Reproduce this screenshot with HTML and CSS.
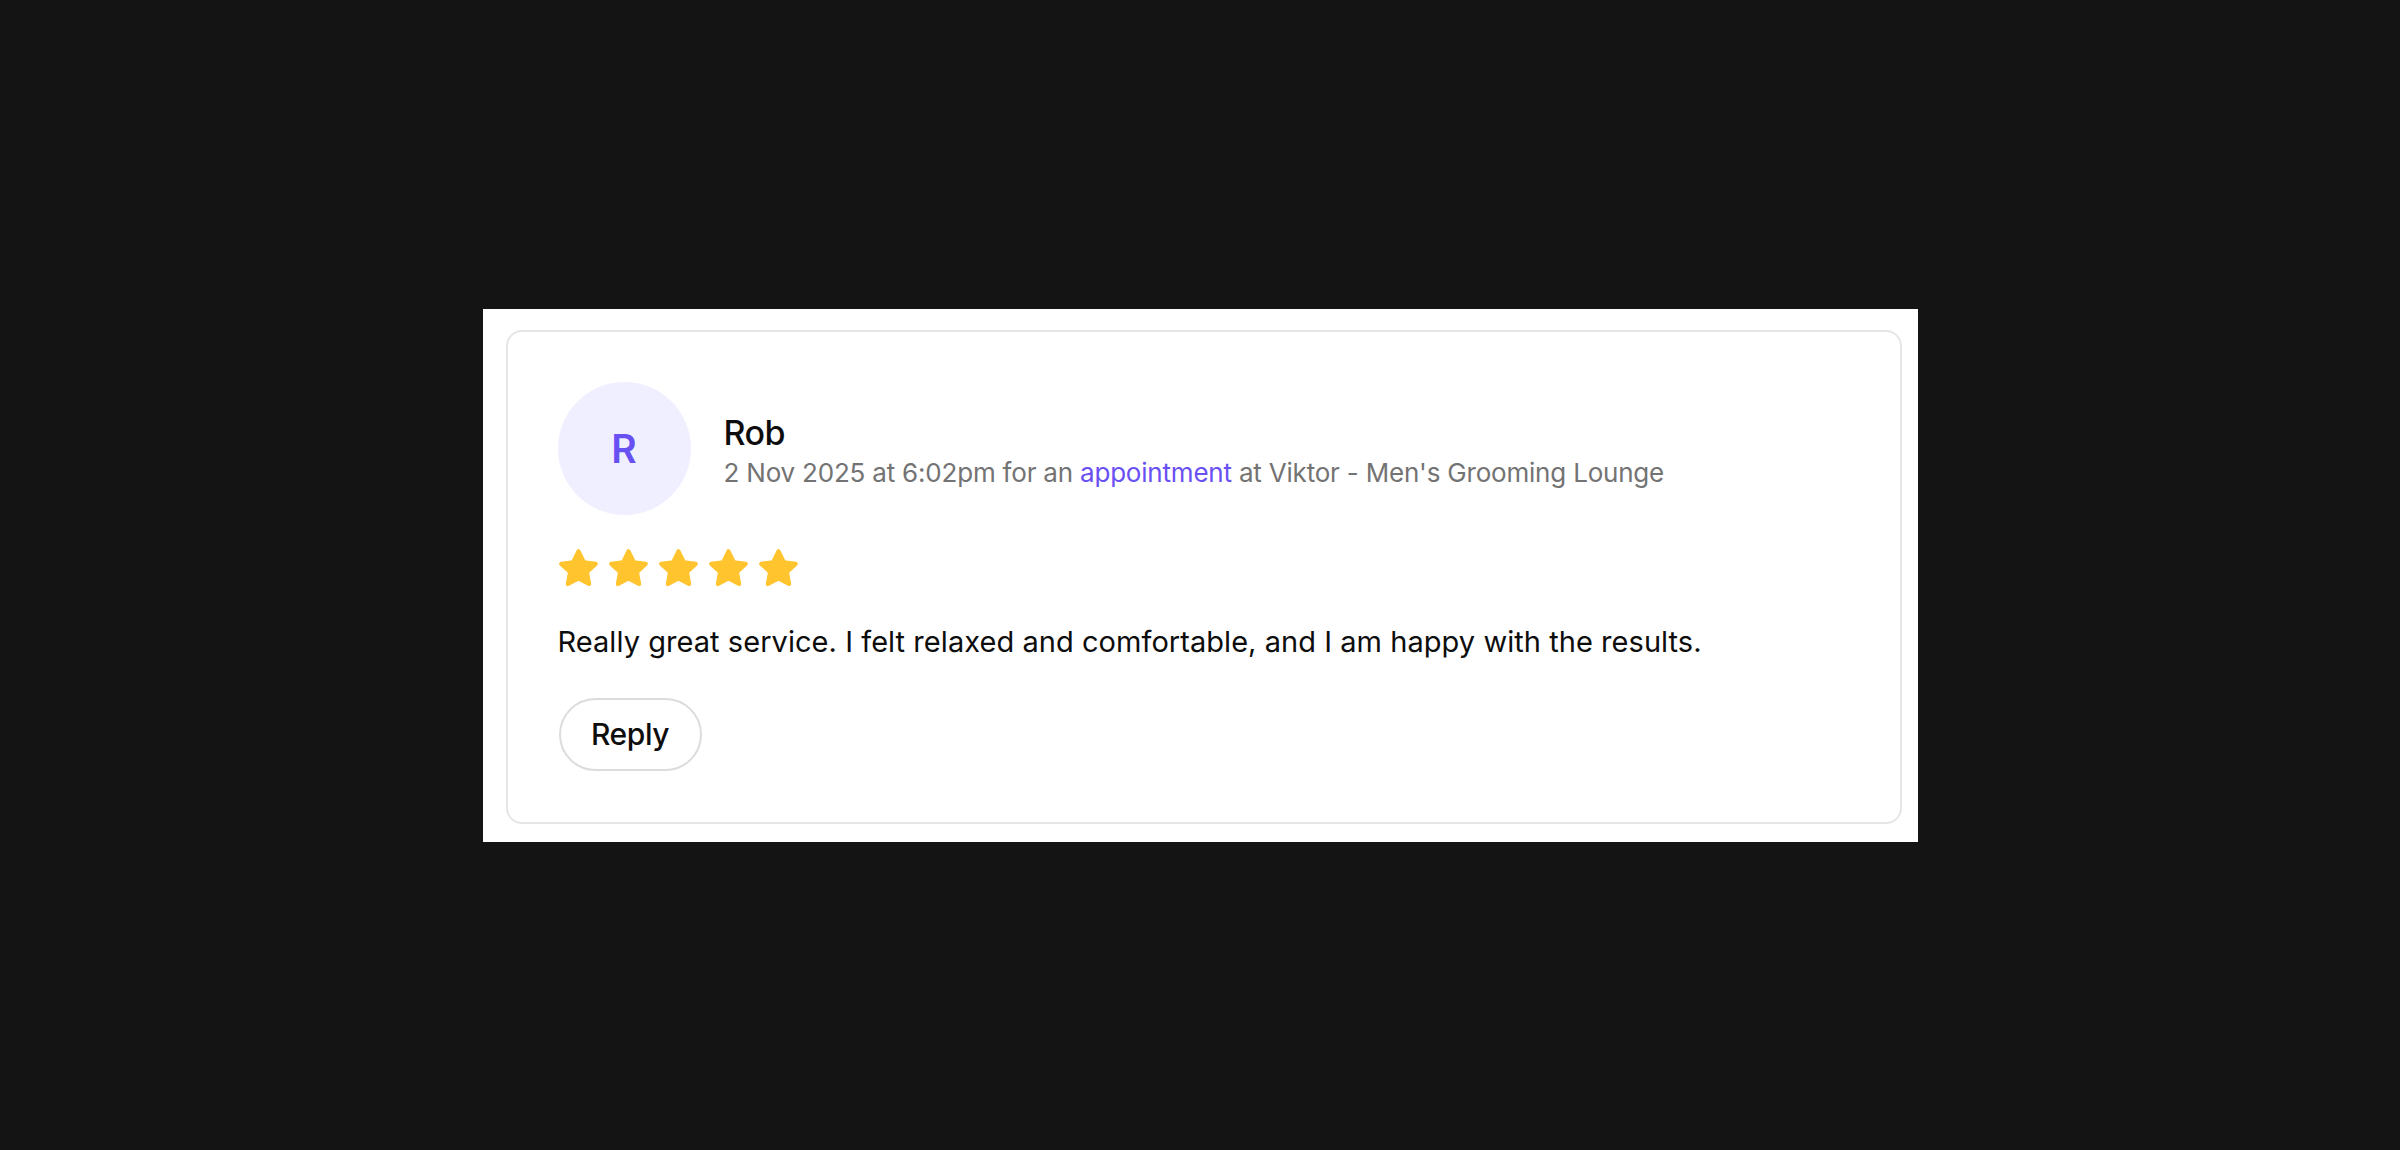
FILE: index.html
```html
<!DOCTYPE html>
<html lang="en">
<head>
<meta charset="utf-8">
<title>Review</title>
<link rel="stylesheet" href="styles.css">
</head>
<body>
<div class="stage">
  <div class="panel">
    <div class="card">
      <div class="header">
        <div class="avatar">R</div>
        <div class="meta">
          <div class="name">Rob</div>
          <div class="sub">2 Nov 2025 at 6:02pm for an <a class="link" href="#">appointment</a> at Viktor - Men's Grooming Lounge</div>
        </div>
      </div>
      <div class="stars">
        <svg class="star" viewBox="2 2 20 20"><path d="M12 3.2l2.7 5.6 6.1.8-4.5 4.2 1.1 6.1L12 17l-5.4 2.9 1.1-6.1-4.5-4.2 6.1-.8z"/></svg>
        <svg class="star" viewBox="2 2 20 20"><path d="M12 3.2l2.7 5.6 6.1.8-4.5 4.2 1.1 6.1L12 17l-5.4 2.9 1.1-6.1-4.5-4.2 6.1-.8z"/></svg>
        <svg class="star" viewBox="2 2 20 20"><path d="M12 3.2l2.7 5.6 6.1.8-4.5 4.2 1.1 6.1L12 17l-5.4 2.9 1.1-6.1-4.5-4.2 6.1-.8z"/></svg>
        <svg class="star" viewBox="2 2 20 20"><path d="M12 3.2l2.7 5.6 6.1.8-4.5 4.2 1.1 6.1L12 17l-5.4 2.9 1.1-6.1-4.5-4.2 6.1-.8z"/></svg>
        <svg class="star" viewBox="2 2 20 20"><path d="M12 3.2l2.7 5.6 6.1.8-4.5 4.2 1.1 6.1L12 17l-5.4 2.9 1.1-6.1-4.5-4.2 6.1-.8z"/></svg>
      </div>
      <p class="review">Really great service. I felt relaxed and comfortable, and I am happy with the results.</p>
      <div class="actions">
        <button class="reply" type="button">Reply</button>
      </div>
    </div>
  </div>
</div>
</body>
</html>
```

FILE: styles.css
```css
* {
  box-sizing: border-box;
}

html, body {
  margin: 0;
  padding: 0;
  background: #141414;
}

body {
  font-family: Inter, "Liberation Sans", sans-serif;
  color: #0d0d0d;
}

.stage {
  min-height: 100vh;
  display: flex;
  align-items: center;
  justify-content: center;
}

.panel {
  width: 1435px;
  height: 533px;
  background: #ffffff;
  padding: 21px 16px 18px 23px;
}

.card {
  height: 100%;
  border: 2px solid #e6e6e6;
  border-radius: 16px;
  padding: 50px;
  display: flex;
  flex-direction: column;
}

.header {
  display: flex;
  align-items: center;
  gap: 33px;
}

.avatar {
  width: 133px;
  height: 133px;
  flex: none;
  border-radius: 50%;
  background: #f0efff;
  color: #6950f3;
  font-size: 39px;
  font-weight: 600;
  display: flex;
  align-items: center;
  justify-content: center;
}

.meta {
  display: flex;
  flex-direction: column;
  gap: 2px;
  padding-top: 5px;
}

.name {
  font-size: 34px;
  font-weight: 450;
  line-height: 42px;
  letter-spacing: -0.6px;
}

.sub {
  font-size: 26px;
  line-height: 34px;
  color: #737373;
  letter-spacing: -0.2px;
}

.link {
  color: #6950f3;
  text-decoration: none;
}

.stars {
  display: flex;
  gap: 11px;
  margin-top: 34px;
  margin-left: 1px;
}

.star {
  width: 39px;
  height: 39px;
  display: block;
}

.star path {
  fill: #ffc42e;
  stroke: #ffc42e;
  stroke-width: 2.2;
  stroke-linejoin: round;
}

.review {
  margin: 34px 0 0;
  font-size: 29px;
  line-height: 40px;
  letter-spacing: 0.05px;
}

.actions {
  margin-top: 36px;
  display: flex;
}

.reply {
  width: 143px;
  height: 73px;
  border: 2px solid #dcdcdc;
  border-radius: 999px;
  background: #ffffff;
  font-family: Inter, "Liberation Sans", sans-serif;
  font-size: 30px;
  font-weight: 500;
  color: #0d0d0d;
  letter-spacing: -0.4px;
  padding: 0;
  margin-left: 1px;
}
```
